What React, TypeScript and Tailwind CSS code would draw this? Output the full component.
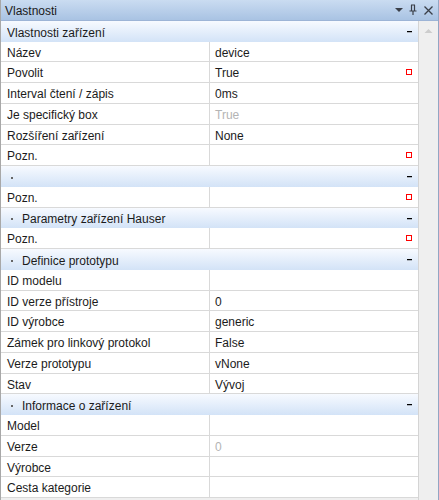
import React from 'react'

type Row =
  | { kind: 'cat'; label: string; dot?: boolean }
  | { kind: 'prop'; label: string; value?: string; muted?: boolean; flag?: boolean }

const ROWS: Row[] = [
  { kind: 'cat', label: 'Vlastnosti zařízení' },
  { kind: 'prop', label: 'Název', value: 'device' },
  { kind: 'prop', label: 'Povolit', value: 'True', flag: true },
  { kind: 'prop', label: 'Interval čtení / zápis', value: '0ms' },
  { kind: 'prop', label: 'Je specifický box', value: 'True', muted: true },
  { kind: 'prop', label: 'Rozšíření zařízení', value: 'None' },
  { kind: 'prop', label: 'Pozn.', flag: true },
  { kind: 'cat', label: '', dot: true },
  { kind: 'prop', label: 'Pozn.', flag: true },
  { kind: 'cat', label: 'Parametry zařízení Hauser', dot: true },
  { kind: 'prop', label: 'Pozn.', flag: true },
  { kind: 'cat', label: 'Definice prototypu', dot: true },
  { kind: 'prop', label: 'ID modelu' },
  { kind: 'prop', label: 'ID verze přístroje', value: '0' },
  { kind: 'prop', label: 'ID výrobce', value: 'generic' },
  { kind: 'prop', label: 'Zámek pro linkový protokol', value: 'False' },
  { kind: 'prop', label: 'Verze prototypu', value: 'vNone' },
  { kind: 'prop', label: 'Stav', value: 'Vývoj' },
  { kind: 'cat', label: 'Informace o zařízení', dot: true },
  { kind: 'prop', label: 'Model' },
  { kind: 'prop', label: 'Verze', value: '0', muted: true },
  { kind: 'prop', label: 'Výrobce' },
  { kind: 'prop', label: 'Cesta kategorie' },
]

const rowH = (i: number) => (i % 4 === 1 ? 'h-[20px]' : 'h-[21px]')

function Flag() {
  return (
    <svg width="6" height="6" viewBox="0 0 6 6" shapeRendering="crispEdges" className="shrink-0">
      <rect x="0.5" y="0.5" width="5" height="5" fill="none" stroke="#ff0000" strokeWidth="1" />
    </svg>
  )
}

function CategoryRow({ row, h }: { row: Extract<Row, { kind: 'cat' }>; h: string }) {
  return (
    <div className={`${h} flex items-center bg-gradient-to-b from-[#f7faff] to-[#d3e3f7] pl-[6px] pr-[6px]`}>
      {row.dot && <span className="w-[2px] h-[2px] bg-[#666] ml-[4px] mr-[9px] mt-[2px]" />}
      <span className="flex-1 truncate pt-[2px]">{row.label}</span>
      <span className="w-[5px] h-[1px] bg-[#000] shadow-[0_1px_0_rgba(0,0,0,0.25)]" />
    </div>
  )
}

function PropRow({ row, h }: { row: Extract<Row, { kind: 'prop' }>; h: string }) {
  return (
    <div className={`${h} flex bg-white border-b border-[#d9d9d9]`}>
      <div className="w-[209px] shrink-0 border-r border-[#d9d9d9] pl-[6px] flex items-center truncate">
        <span className="pt-[2px]">{row.label}</span>
      </div>
      <div className="flex-1 flex items-center pl-[5px] pr-[6px]">
        <span className={row.muted ? 'flex-1 pt-[2px] text-[#b4b4b4]' : 'flex-1 pt-[2px]'}>{row.value}</span>
        {row.flag && <Flag />}
      </div>
    </div>
  )
}

export default function App() {
  return (
    <div
      className="w-[439px] h-[500px] overflow-hidden bg-[#efefef] text-[12px] text-[#1b1b1b] flex flex-col border-l border-[#a8a8a8] border-r border-r-[#93a6c4]"
      style={{ fontFamily: '"Liberation Sans", Arial, sans-serif' }}
    >
      {/* title bar */}
      <div className="h-[21px] shrink-0 flex items-center pl-[4px] pr-[2px] bg-gradient-to-b from-[#cadcf1] to-[#a9c3e3] border-b border-[#9db4d6] text-[#1a1a1a]">
        <span className="flex-1 pt-[2px]">Vlastnosti</span>
        <svg width="10" height="10" viewBox="0 0 10 10" className="mr-[4px]">
          <path d="M1 3 L9 3 L5 7 Z" fill="#3a3f48" />
        </svg>
        <svg width="10" height="12" viewBox="0 0 10 12" className="mr-[5px]">
          <path d="M3 1 H7 M3.5 1 V7 M6.5 1 V7 M1.5 7 H8.5 M5 7 V11" stroke="#3a3f48" strokeWidth="1.2" fill="none" />
        </svg>
        <svg width="11" height="11" viewBox="0 0 11 11" className="mr-[2px]">
          <path d="M1.5 1.5 L9.5 9.5 M9.5 1.5 L1.5 9.5" stroke="#3a3f48" strokeWidth="1.3" />
        </svg>
      </div>

      <div className="flex flex-1 min-h-0">
        {/* grid */}
        <div className="w-[418px] shrink-0 border-r border-[#d4d4d4] flex flex-col">
          {ROWS.map((r, i) =>
            r.kind === 'cat' ? (
              <CategoryRow key={i} row={r} h={rowH(i)} />
            ) : (
              <PropRow key={i} row={r} h={rowH(i)} />
            )
          )}
        </div>
        {/* scrollbar */}
        <div className="flex-1 flex justify-center pt-[7px]">
          <svg width="9" height="6" viewBox="0 0 9 6">
            <path d="M0.5 5 L4.5 1 L8.5 5 Z" fill="#cdcdcd" />
          </svg>
        </div>
      </div>
    </div>
  )
}
